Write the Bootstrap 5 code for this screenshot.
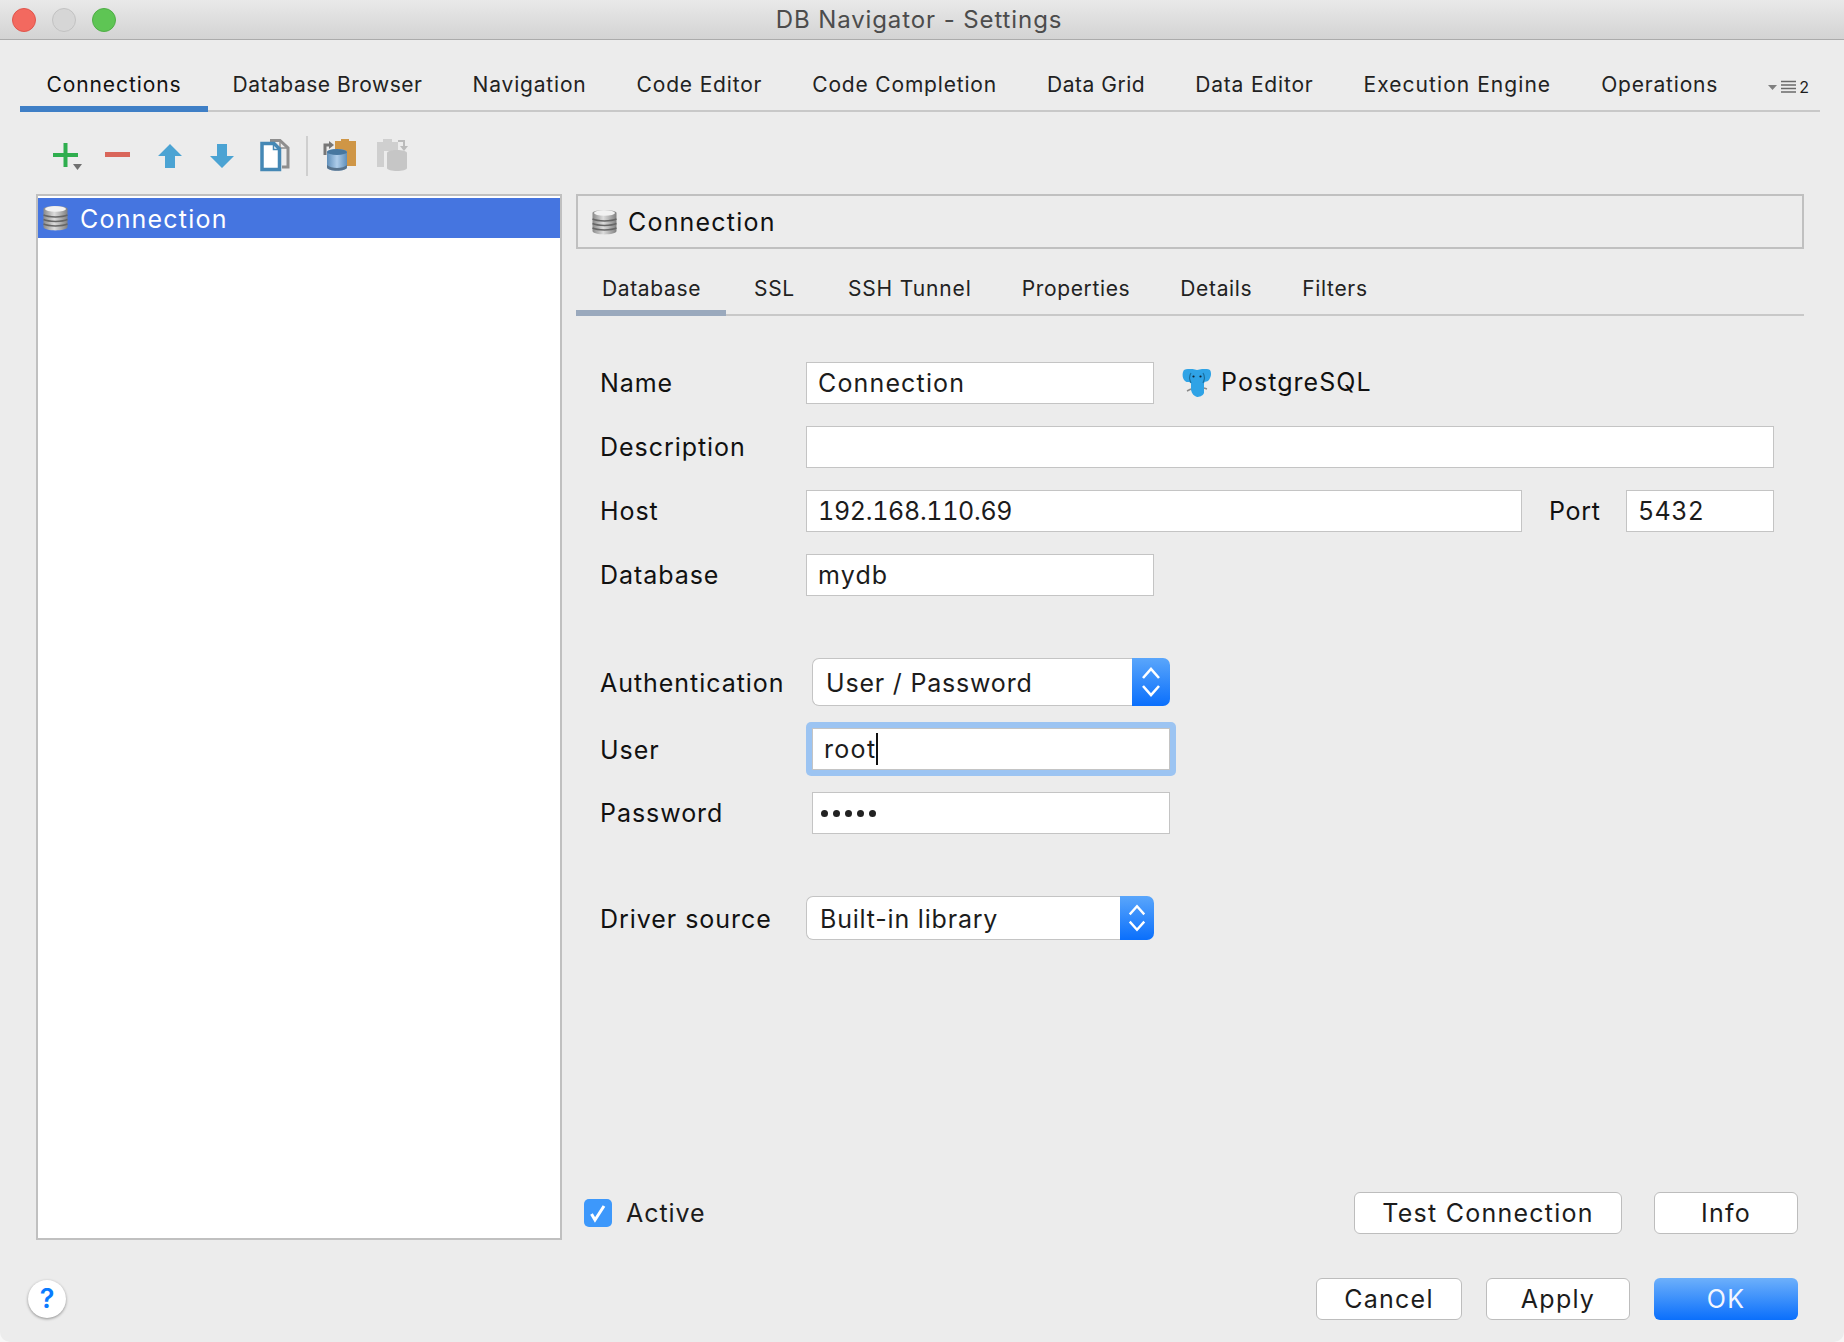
<!DOCTYPE html>
<html lang="en">
<head>
<meta charset="utf-8">
<title>DB Navigator - Settings</title>
<link rel="stylesheet" href="https://cdn.jsdelivr.net/npm/bootstrap@5.3.0/dist/css/bootstrap.min.css">
<style>
html,body{margin:0;padding:0;background:#f7f7f7;}
body{font-family:"Inter","Liberation Sans",sans-serif;color:#1c1c1c;}
.svgdefs{display:block;width:0;height:0;overflow:hidden;}
.win{width:1844px;height:1342px;background:#ececec;display:flex;flex-direction:column;overflow:hidden;border-radius:0 0 10px 10px;}
.titlebar{height:40px;flex:none;background:linear-gradient(#e9e9e9,#d3d3d3);border-bottom:1px solid #ababab;display:grid;grid-template-columns:1fr auto 1fr;align-items:center;padding-left:12px;}
.wintitle{font-size:24px;color:#4c4c4c;letter-spacing:.9px;margin-right:18px;line-height:1;}
.lights{display:flex;gap:16px;}
.lamp{width:24px;height:24px;border-radius:50%;display:block;}
.lamp-r{background:#f3695f;border:1px solid #e0554c;}
.lamp-y{background:#d6d6d6;border:1px solid #c2c2c2;}
.lamp-g{background:#5ec554;border:1px solid #4fae46;}
.maintabs{margin:0 24px 0 20px;height:72px;flex:none;border-bottom:2px solid #c8c8c8;flex-wrap:nowrap;align-items:flex-end;}
.maintab{font-size:21px;letter-spacing:.82px;line-height:1;color:#222;padding:0 25px 11px;height:48px;display:flex;align-items:flex-end;text-decoration:none;border-bottom:6px solid transparent;margin-bottom:-2px;white-space:nowrap;}
.maintab.on{border-bottom-color:#3f7fc6;color:#111;width:187.5px;padding-left:26.5px;padding-right:0;letter-spacing:.9px;}
.maintab.tight{letter-spacing:.52px;}
.maintab.wide{letter-spacing:1.05px;}
.moretabs{margin-left:auto;margin-right:11px;display:flex;align-items:center;gap:3px;font-size:16px;line-height:1;padding-bottom:15px;}
.toolrow{height:82px;flex:none;padding:30px 0 0 53px;display:flex;align-items:flex-start;}
.tic{display:block;flex:none;}
.m-minus{margin-left:22px;}
.m-up{margin-left:27px;}
.m-down{margin-left:28px;}
.m-copy{margin-left:26px;margin-top:-3px;}
.m-paste{margin-top:-3px;}
.m-off{margin-left:19px;margin-top:-3px;}
.toolsep{width:2px;height:40px;background:#cfcfcf;margin:-6px 15px 0 16px;flex:none;}
.mainrow{height:1046px;flex:none;margin:0 40px 0 36px;display:flex;gap:14px;}
.leftlist{width:526px;flex:none;background:#fff;border:2px solid #c0c0c0;padding-top:2px;border-radius:0;}
.leftitem{height:40px;background:#4575e0;color:#fff;display:flex;align-items:center;gap:12px;padding:2px 0 0 5px;border:0;border-radius:0;font-size:25px;letter-spacing:1.2px;line-height:1;}
.leftitem svg{margin-top:-2px;}
.rightcol{flex:1;display:flex;flex-direction:column;min-width:0;}
.headbox{height:55px;flex:none;border:2px solid #c0c0c0;display:flex;align-items:center;gap:11px;padding:2px 0 0 14px;font-size:25px;letter-spacing:1.2px;color:#111;}
.headbox svg{margin-top:-2px;}
.subtabs{height:67px;flex:none;border-bottom:2px solid #c8c8c8;flex-wrap:nowrap;align-items:flex-end;}
.subtab{font-size:21px;letter-spacing:.65px;line-height:1;color:#222;padding:0 25px 11px;height:50px;display:flex;align-items:flex-end;text-decoration:none;border-bottom:6px solid transparent;margin-bottom:-2px;white-space:nowrap;}
.subtab.on{border-bottom-color:#9aa9bd;padding-left:26px;}
.subtab.roomy{padding-left:28px;padding-right:28px;}
.subtab.loose{letter-spacing:.87px;}
.formarea{flex:1;padding:46px 0 0 24px;display:flex;flex-direction:column;}
.frow{display:flex;align-items:center;height:42px;margin-bottom:22px;}
.flabel{width:206px;flex:none;font-size:25px;letter-spacing:.95px;line-height:1;color:#111;white-space:nowrap;}
.flabel.lower{padding-top:2px;}
.field.form-control{height:42px;border:1.5px solid #c4c4c4;border-radius:0;padding:0 11px;font-size:25px;letter-spacing:1.15px;color:#1c1c1c;background:#fff;box-shadow:none;font-family:inherit;flex:none;}
.f-name{width:348px !important;}
.f-wide{width:968px !important;}
.f-host{width:716px !important;}
.f-port{width:148px !important;}
.f-num.form-control{font-variant-numeric:tabular-nums;letter-spacing:-.3px;}
.f-port.form-control{letter-spacing:.4px;}
.portlab{font-size:25px;letter-spacing:.7px;width:50px;margin:0 27px;flex:none;color:#111;padding-top:1px;}
.dbtype{display:flex;align-items:center;gap:9px;margin-left:28px;font-size:25px;letter-spacing:1.05px;color:#111;}
.authgap{height:40px;flex:none;display:flex;}
.ig-auth{width:358px;height:48px;margin-left:6px;flex-wrap:nowrap;}
.ig-drv{width:348px;height:44px;flex-wrap:nowrap;}
.selbox.form-control{height:100%;border:1.5px solid #c4c4c4;border-right:0;border-radius:7px 0 0 7px;background:#fff;font-size:25px;letter-spacing:.8px;color:#1c1c1c;padding:2px 0 0 13px;box-shadow:none;}
.selbtn.input-group-text{border:0;border-radius:0 7px 7px 0;background:linear-gradient(#5aa6fb,#0a6ffc);padding:0;width:38px;justify-content:center;margin-left:0 !important;}
.ig-drv .selbtn.input-group-text{width:34px;}
.focusring{margin-left:0;padding:6px;background:#9cc4f2;border-radius:5px;width:370px;height:54px;display:flex;flex:none;}
.focusring .field.form-control{width:100%;height:42px;padding:2px 0 0 11px;letter-spacing:1.3px;}
.caret-mark{width:2px;height:32px;background:#111;display:inline-block;margin-top:-3px;margin-left:0;}
.faux{display:flex;align-items:center;}
.f-pass{width:358px !important;margin-left:6px;display:flex;align-items:center;padding-left:8px !important;gap:5px;}
.pdot{width:7px;height:7px;border-radius:50%;background:#222;display:block;}
.activerow{display:flex;align-items:center;padding:0 6px 7px 8px;height:48px;flex:none;}
.form-check.chk{display:flex;align-items:center;gap:14px;margin:0;padding:0;min-height:0;}
.chk .form-check-input{width:28px;height:28px;margin:0;float:none;border:0;border-radius:5px;background-color:#3d98fb;background-size:28px 28px;background-image:url("data:image/svg+xml,%3csvg xmlns='http://www.w3.org/2000/svg' viewBox='0 0 28 28'%3e%3cpath fill='none' stroke='%23fff' stroke-width='3' d='M7.500 15 11 21 20 7'/%3e%3c/svg%3e");}
.chk .form-check-label{font-size:25px;letter-spacing:.95px;color:#1c1c1c;opacity:1;line-height:1;padding-top:2px;}
.macbtn.btn{height:42px;border:1.5px solid #bdbdbd;border-radius:6px;background:#fff;color:#1c1c1c;font-size:25px;letter-spacing:1.25px;line-height:1;padding:0;display:flex;align-items:center;justify-content:center;}
.activerow .macbtn.btn{padding-top:2px;}
.b-test{width:268px;margin-left:auto;}
.b-info{width:144px;margin-left:32px;}
.footrow{flex:1;display:flex;align-items:flex-start;padding:38px 46px 0 28px;}
.helpbtn{width:38px;height:38px;border-radius:50%;background:#fff;box-shadow:0 1px 3px rgba(0,0,0,.4);color:#0a7bff;font-weight:600;font-size:27px;line-height:38px;text-align:center;flex:none;margin-top:2px;}
.b-cancel{width:146px;margin-left:auto;}
.b-apply{width:144px;margin-left:24px;}
.macbtn.b-ok{width:144px;margin-left:24px;border:0;background:linear-gradient(#6db0fb,#0a6ffc);color:#f2f6ff;}
</style>
</head>
<body>
<svg class="svgdefs" width="0" height="0">
 <defs>
  <linearGradient id="cyl" x1="0" y1="0" x2="1" y2="0"><stop offset="0" stop-color="#8a8a8a"/><stop offset=".45" stop-color="#dcdcdc"/><stop offset="1" stop-color="#808080"/></linearGradient>
  <linearGradient id="cylblue" x1="0" y1="0" x2="1" y2="0"><stop offset="0" stop-color="#5f8fba"/><stop offset=".5" stop-color="#aecdea"/><stop offset="1" stop-color="#5f8fba"/></linearGradient>
  <symbol id="dbicon" viewBox="0 0 24 26">
   <path d="M0 4C0 0 24 0 24 4V22C24 26.500 0 26.500 0 22Z" fill="url(#cyl)"/>
   <ellipse cx="12" cy="4" rx="10.500" ry="2.800" fill="#f2f2f2"/>
   <g fill="none" stroke="#666" stroke-width="1.500"><path d="M0 10C5 12.500 19 12.500 24 10"/><path d="M0 14.500C5 17 19 17 24 14.500"/><path d="M0 19C5 21.500 19 21.500 24 19"/></g>
  </symbol>
  <symbol id="updown" viewBox="0 0 22 34">
   <path d="M3 13 11 4 19 13M3 21 11 30 19 21" fill="none" stroke="#fff" stroke-width="2.600"/>
  </symbol>
 </defs>
</svg>
<div class="win">
 <header class="titlebar">
  <div class="lights"><span class="lamp lamp-r"></span><span class="lamp lamp-y"></span><span class="lamp lamp-g"></span></div>
  <div class="wintitle">DB Navigator - Settings</div>
  <div></div>
 </header>
 <nav class="nav maintabs">
  <a class="maintab on" href="#">Connections</a>
  <a class="maintab tight" href="#">Database Browser</a>
  <a class="maintab" href="#">Navigation</a>
  <a class="maintab" href="#">Code Editor</a>
  <a class="maintab" href="#">Code Completion</a>
  <a class="maintab tight" href="#">Data Grid</a>
  <a class="maintab" href="#">Data Editor</a>
  <a class="maintab wide" href="#">Execution Engine</a>
  <a class="maintab" href="#">Operations</a>
  <div class="moretabs">
   <svg width="28" height="14" viewBox="0 0 28 14"><path d="M0 5H9L4.500 10Z" fill="#808080"/><path d="M13 1H29M13 4.500H29M13 8H29M13 11.500H29" transform="translate(0 .5)" stroke="#6a6a6a" stroke-width="1.600"/></svg>
   <span>2</span>
  </div>
 </nav>
 <div class="toolrow">
  <svg class="tic" width="30" height="32" viewBox="0 0 30 32"><path d="M12.500 1V25M0 13H25" stroke="#2fae4e" stroke-width="4"/><path d="M20 22H29L24.500 28Z" fill="#707070"/></svg>
  <svg class="tic m-minus" width="26" height="32" viewBox="0 0 26 32"><path d="M0 12.500H25" stroke="#d9665a" stroke-width="5"/></svg>
  <svg class="tic m-up" width="24" height="32" viewBox="0 0 24 32"><path d="M12 2 24 14H17V26H7V14H0Z" fill="#4ba3d3"/></svg>
  <svg class="tic m-down" width="24" height="32" viewBox="0 0 24 32"><path d="M7 2H17V14H24L12 26 0 14H7Z" fill="#4ba3d3"/></svg>
  <svg class="tic m-copy" width="30" height="33" viewBox="0 0 30 33"><path d="M10 1.500H20L28 9V28H22" fill="none" stroke="#8e8e8e" stroke-width="3"/><path d="M20 1V9H28" fill="none" stroke="#8e8e8e" stroke-width="1.500"/><path d="M2 4.500H14L19.500 10V30.500H2Z" fill="#fff" stroke="#4588b5" stroke-width="3.500"/><path d="M13.500 4V10.500H20" fill="none" stroke="#4588b5" stroke-width="1.500"/></svg>
  <span class="toolsep"></span>
  <svg class="tic m-paste" width="34" height="33" viewBox="0 0 34 33"><path d="M12 2H18V0H26V2H33V27H24V12H12Z" fill="#cf9646"/><path d="M2 16V6H6" fill="none" stroke="#777" stroke-width="3"/><path d="M6 2 11 6 6 10Z" fill="#777"/><path d="M4 13C4 9 24 9 24 13V28C24 33 4 33 4 28Z" fill="url(#cylblue)"/><ellipse cx="14" cy="13" rx="10" ry="3" fill="#47779f"/><path d="M4 26C8 30 20 30 24 26V28C24 33 4 33 4 28Z" fill="#57738d"/></svg>
  <svg class="tic m-off" width="34" height="33" viewBox="0 0 34 33"><path d="M1 3H7V0H16V3H22V12H8V28H1Z" fill="#cfcfcf"/><path d="M22 2H28V8" fill="none" stroke="#bbb" stroke-width="2"/><path d="M24 7H32L28 12Z" fill="#bbb"/><path d="M11 14C11 10 31 10 31 14V29C31 33 11 33 11 29Z" fill="#c6c6c6"/></svg>
 </div>
 <div class="mainrow">
  <div class="leftlist list-group">
   <div class="leftitem list-group-item"><svg width="25" height="26"><use href="#dbicon"/></svg><span>Connection</span></div>
  </div>
  <div class="rightcol">
   <div class="headbox"><svg width="25" height="26"><use href="#dbicon"/></svg><span>Connection</span></div>
   <nav class="nav subtabs">
    <a class="subtab on" href="#">Database</a>
    <a class="subtab roomy" href="#">SSL</a>
    <a class="subtab loose" href="#">SSH Tunnel</a>
    <a class="subtab" href="#">Properties</a>
    <a class="subtab" href="#">Details</a>
    <a class="subtab" href="#">Filters</a>
   </nav>
   <div class="formarea">
    <div class="frow">
     <span class="flabel">Name</span>
     <input class="form-control field f-name" value="Connection">
     <div class="dbtype">
      <svg width="30" height="28" viewBox="0 0 30 28"><path d="M2 1C7-1 12 0 15 1 19 0 24-1 28 1 30 4 29 9 26 12 24 13 23 12 22 14V24C21 27 17 28 15 28 12 27 10 25 9 21V14C7 12 5 14 3 12 0 9 0 4 2 1Z" fill="#2fa3e6"/><path d="M9 4C7 7 7 10 9 14M21 4C23 7 23 10 21 14" fill="none" stroke="#1b6f9e" stroke-width="1.200"/><circle cx="11.500" cy="7.500" r="1.100" fill="#123"/><circle cx="18.500" cy="7.500" r="1.100" fill="#123"/><path d="M5 22 9 20M25 20 22 19" stroke="#8a8a8a" stroke-width="1.500"/></svg>
      <span>PostgreSQL</span>
     </div>
    </div>
    <div class="frow">
     <span class="flabel">Description</span>
     <input class="form-control field f-wide" value="">
    </div>
    <div class="frow">
     <span class="flabel">Host</span>
     <input class="form-control field f-host f-num" value="192.168.110.69">
     <span class="portlab">Port</span>
     <input class="form-control field f-port f-num" value="5432">
    </div>
    <div class="frow">
     <span class="flabel">Database</span>
     <input class="form-control field f-name" value="mydb">
    </div>
    <div class="authgap"></div>
    <div class="frow mb-3" style="height:48px">
     <span class="flabel lower">Authentication</span>
     <div class="input-group ig-auth">
      <input class="form-control selbox" value="User / Password" readonly>
      <span class="input-group-text selbtn"><svg width="22" height="34"><use href="#updown"/></svg></span>
     </div>
    </div>
    <div class="frow" style="height:54px;margin-bottom:16px">
     <span class="flabel lower">User</span>
     <div class="focusring"><div class="form-control field faux">root<span class="caret-mark"></span></div></div>
    </div>
    <div class="frow" style="margin-bottom:62px">
     <span class="flabel">Password</span>
     <div class="form-control field f-pass"><i class="pdot"></i><i class="pdot"></i><i class="pdot"></i><i class="pdot"></i><i class="pdot"></i></div>
    </div>
    <div class="frow mb-0" style="height:44px">
     <span class="flabel lower">Driver source</span>
     <div class="input-group ig-drv">
      <input class="form-control selbox" value="Built-in library" readonly>
      <span class="input-group-text selbtn"><svg width="20" height="32"><use href="#updown"/></svg></span>
     </div>
    </div>
   </div>
   <div class="activerow">
    <div class="form-check chk">
     <input class="form-check-input" type="checkbox" id="activeChk" checked>
     <label class="form-check-label" for="activeChk">Active</label>
    </div>
    <button type="button" class="btn macbtn b-test">Test Connection</button>
    <button type="button" class="btn macbtn b-info">Info</button>
   </div>
  </div>
 </div>
 <div class="footrow">
  <div class="helpbtn">?</div>
  <button type="button" class="btn macbtn b-cancel">Cancel</button>
  <button type="button" class="btn macbtn b-apply">Apply</button>
  <button type="button" class="btn macbtn b-ok">OK</button>
 </div>
</div>
<script src="https://cdn.jsdelivr.net/npm/bootstrap@5.3.0/dist/js/bootstrap.bundle.min.js"></script>
</body>
</html>
